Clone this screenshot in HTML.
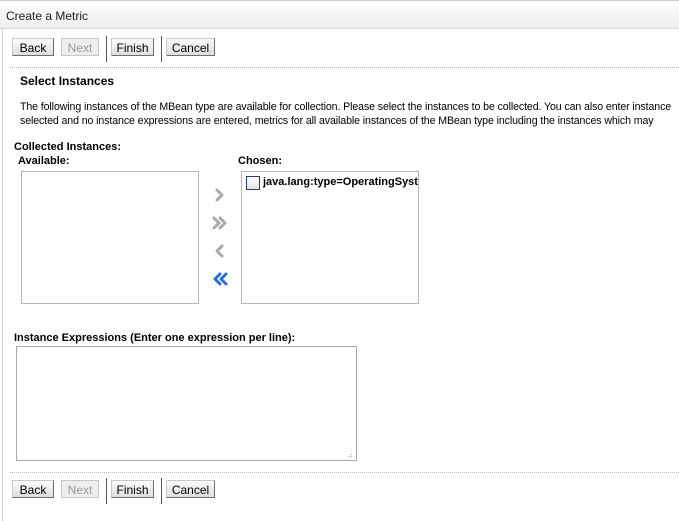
<!DOCTYPE html>
<html><head><style>
body{margin:0;width:679px;height:521px;background:#fff;font-family:"Liberation Sans","DejaVu Sans",sans-serif;font-size:11px;color:#000;position:relative;overflow:hidden}
.a{position:absolute;white-space:nowrap}
.title{left:0;top:0;width:679px;height:27px;background:linear-gradient(#fdfdfd,#eceef0);border-bottom:1px solid #d4d8dc;border-top:1px solid #cfd3d7}
.title span{position:absolute;left:6px;top:8px;font-size:12px;color:#1b1b1b}
.btn{position:absolute;height:18px;border:1px solid #8a8a8a;border-color:#c8c8c8 #6d6d6d #6d6d6d #c8c8c8;background:linear-gradient(#fcfcfc,#dedede);font-size:12px;text-align:center;line-height:18px;box-sizing:border-box}
.dis{color:#9a9a9a;border-color:#c8c8c8;background:#eeeeec}
.sep{position:absolute;width:1px;height:26px;background:#555}
.dot{position:absolute;left:10px;width:669px;border-top:1px dotted #bbb}
.box{position:absolute;border:1px solid #b5b5b5;box-sizing:border-box;background:#fff}
b{font-weight:bold}
svg{position:absolute}
</style></head><body>
<div style="position:absolute;left:2px;top:28px;width:1px;height:493px;background:#d0d0d0"></div>
<div class="a title"><span>Create a Metric</span></div>
<div class="btn" style="left:12px;top:38px;width:42px">Back</div>
<div class="btn dis" style="left:61px;top:38px;width:38px">Next</div>
<div class="sep" style="left:106px;top:36px"></div>
<div class="btn" style="left:111px;top:38px;width:43px">Finish</div>
<div class="sep" style="left:161px;top:36px"></div>
<div class="btn" style="left:166px;top:38px;width:49px">Cancel</div>
<div class="dot" style="top:67px"></div>
<div class="a" style="left:20px;top:74px;font-size:12px"><b>Select Instances</b></div>
<div class="a" style="left:20px;top:100px;line-height:14px;font-size:10.6px;letter-spacing:-0.1px">The following instances of the MBean type are available for collection. Please select the instances to be collected. You can also enter instance<br>selected and no instance expressions are entered, metrics for all available instances of the MBean type including the instances which may</div>
<div class="a" style="left:14px;top:141px"><b>Collected Instances:</b></div>
<div class="a" style="left:18px;top:155px"><b>Available:</b></div>
<div class="a" style="left:238px;top:155px"><b>Chosen:</b></div>
<div class="box" style="left:21px;top:171px;width:178px;height:133px"></div>
<div class="box" style="left:241px;top:171px;width:178px;height:133px;overflow:hidden">
<div style="position:absolute;left:4px;top:4px;width:12px;height:12px;border:1px solid #1f3f6a;background:linear-gradient(#fff,#e4e4e4)"></div>
<div class="a" style="left:21px;top:4px"><b>java.lang:type=OperatingSystem</b></div></div>
<svg style="left:210px;top:186px" width="20" height="110" viewBox="0 0 20 110">
<g fill="none" stroke-linecap="round" stroke-linejoin="round" stroke-width="3">
<path d="M7 4 L12 9 L7 14" stroke="#aaa"/>
<path d="M4 32 L9 37 L4 42 M10 32 L15 37 L10 42" stroke="#aaa"/>
<path d="M12 60 L7 65 L12 70" stroke="#aaa"/>
<path d="M10 88 L5 93 L10 98 M16 88 L11 93 L16 98" stroke="#2a6fd0"/>
</g></svg>
<div class="a" style="left:14px;top:332px"><b>Instance Expressions (Enter one expression per line):</b></div>
<div class="box" style="left:16px;top:346px;width:341px;height:115px;border-color:#a9a9a9"><div class="a" style="right:3px;bottom:0;font-size:8px;color:#aaa">⠴</div></div>
<div class="dot" style="top:472px"></div>
<div class="btn" style="left:12px;top:480px;width:42px">Back</div>
<div class="btn dis" style="left:61px;top:480px;width:38px">Next</div>
<div class="sep" style="left:106px;top:478px"></div>
<div class="btn" style="left:111px;top:480px;width:43px">Finish</div>
<div class="sep" style="left:161px;top:478px"></div>
<div class="btn" style="left:166px;top:480px;width:49px">Cancel</div>
</body></html>
